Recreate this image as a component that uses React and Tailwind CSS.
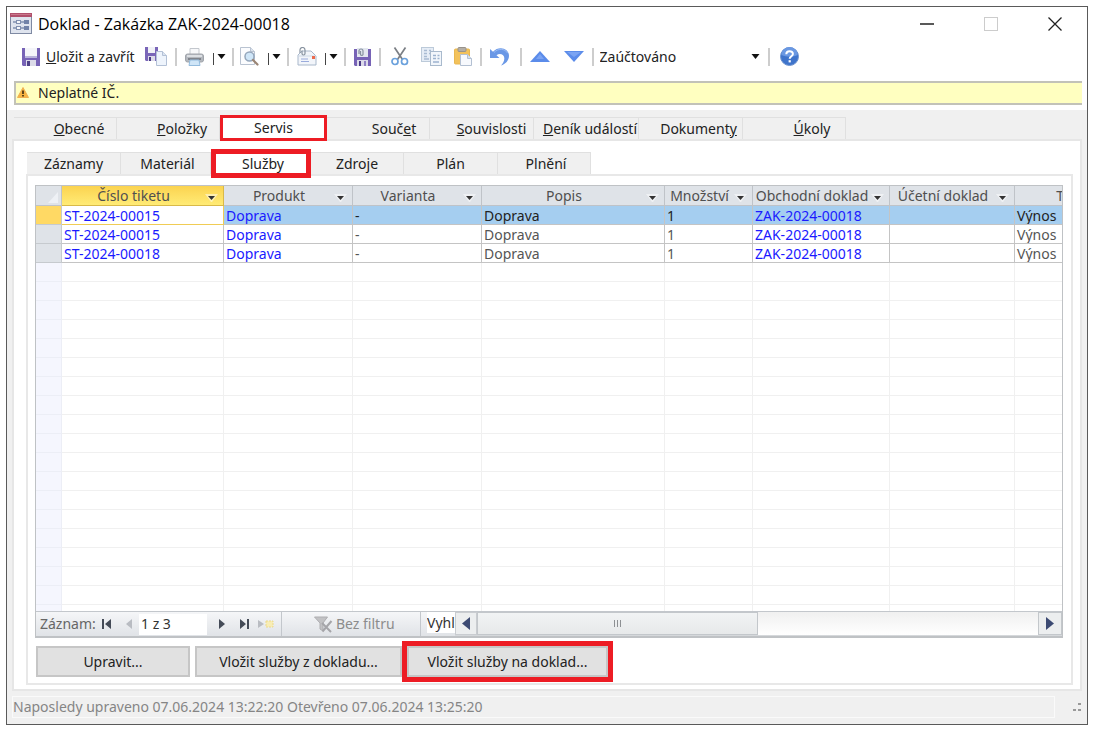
import React, { useState } from "react";

const mainTabs = [
  { label: "Obecné", key: 0, size: "w-[103px] pl-7" },
  { label: "Položky", key: 0, size: "w-[103px] pl-7" },
  { label: "Servis", key: -1, size: "w-[107px]" },
  { label: "Součet", key: 4, size: "w-[103px] pl-8" },
  { label: "Souvislosti", key: 0, size: "w-[104px] pl-5" },
  { label: "Deník událostí", key: 0, size: "w-[105px] pl-2" },
  { label: "Dokumenty", key: 8, size: "w-[104px] pl-4" },
  { label: "Úkoly", key: 0, size: "w-[103px] pl-9" },
];

const subTabs = [
  { label: "Záznamy", size: "w-[94px]" },
  { label: "Materiál", size: "w-[90px] pl-1" },
  { label: "Služby", size: "w-[100px] pl-1" },
  { label: "Zdroje", size: "w-[93px]" },
  { label: "Plán", size: "w-[94px]" },
  { label: "Plnění", size: "w-[93px] pl-1" },
];

const columns = [
  { name: "Číslo tiketu", width: "w-[162px]" },
  { name: "Produkt", width: "w-[129px]" },
  { name: "Varianta", width: "w-[129px]" },
  { name: "Popis", width: "w-[183px]" },
  { name: "Množství", width: "w-[88px]" },
  { name: "Obchodní doklad", width: "w-[137px]" },
  { name: "Účetní doklad", width: "w-[125px]" },
  { name: "Typ", width: "w-[125px]" },
];

const rows = [
  ["ST-2024-00015", "Doprava", "-", "Doprava", "1", "ZAK-2024-00018", "", "Výnos"],
  ["ST-2024-00015", "Doprava", "-", "Doprava", "1", "ZAK-2024-00018", "", "Výnos"],
  ["ST-2024-00018", "Doprava", "-", "Doprava", "1", "ZAK-2024-00018", "", "Výnos"],
];

const linkColumns = [0, 1, 5];
const emptyRows = Array.from({ length: 60 });

// Label with its access key underlined
const KeyLabel = ({ text, at }) => {
  if (at < 0) return <span>{text}</span>;
  return (
    <span>
      {text.slice(0, at)}
      <span className="underline">{text[at]}</span>
      {text.slice(at + 1)}
    </span>
  );
};

const Caret = () => (
  <svg width="9" height="5" viewBox="0 0 9 5" className="shrink-0">
    <path d="M0.5 0h8L4.5 5z" fill="#111" />
  </svg>
);

const Sep = ({ className }) => (
  <span className={`h-[18px] w-0.5 shrink-0 bg-[#cdcdcd] ${className}`} />
);

const FormIcon = () => (
  <svg width="22" height="21" viewBox="0 0 22 21">
    <rect x="0.5" y="0.5" width="21" height="20" fill="#dfe4ee" stroke="#7f8aa3" />
    <rect x="0" y="0" width="22" height="4" fill="#b0506c" />
    <rect x="1" y="1" width="20" height="1" fill="#c9788c" />
    <path d="M3 9h4M3 15h4M11 9h3M11 15h3" stroke="#8190b0" strokeWidth="1.5" />
    <rect x="6.5" y="7.5" width="4" height="3" fill="#f4f6fa" stroke="#8190b0" />
    <rect x="6.5" y="13.5" width="4" height="3" fill="#f4f6fa" stroke="#8190b0" />
    <rect x="14" y="7" width="5" height="4" fill="#7182a8" />
    <rect x="14" y="13" width="5" height="4" fill="#7182a8" />
  </svg>
);

const SaveIcon = () => (
  <svg width="18" height="18" viewBox="0 0 18 18">
    <path d="M0 0h18v18H1l-1-1z" fill="#7763b6" />
    <rect x="3" y="0" width="12" height="9" fill="#f4f5f9" />
    <rect x="3" y="8" width="12" height="2" fill="#b9b4da" />
    <rect x="4" y="12" width="10" height="6" fill="#dcdbe9" />
    <rect x="5" y="13" width="3" height="5" fill="#4f4288" />
  </svg>
);

const SaveNewIcon = () => (
  <svg width="22" height="19" viewBox="0 0 22 19">
    <path d="M0 0h13v14H1l-1-1z" fill="#7a66b8" />
    <rect x="3" y="0" width="7" height="6" fill="#f1f2f7" />
    <rect x="3" y="9" width="7" height="5" fill="#dcdbe9" />
    <rect x="4" y="10" width="2" height="4" fill="#4a3a86" />
    <path d="M11.5 4.5h6l4 4v10h-10z" fill="#eef4fc" stroke="#b3c1d6" />
    <path d="M17.5 4.5v4h4" fill="#dbe4f0" stroke="#b3c1d6" />
  </svg>
);

const PrinterIcon = () => (
  <svg width="19" height="18" viewBox="0 0 19 18">
    <path d="M5 0.5h9v6H5z" fill="#f7f8fa" stroke="#c3c7cd" />
    <rect x="0.5" y="6" width="18" height="8" rx="2" fill="#b4b8be" stroke="#a0a4ab" />
    <rect x="2" y="7" width="15" height="2" fill="#dcdfe3" />
    <rect x="3" y="10" width="13" height="2" fill="#80848c" />
    <path d="M5 12h9l1 5.5H4z" fill="#cfe5f7" stroke="#93bbdd" />
  </svg>
);

const PreviewIcon = () => (
  <svg width="19" height="19" viewBox="0 0 19 19">
    <path d="M0.5 0.5h10l4 4v13h-14z" fill="#fbfcfe" stroke="#b9c3d1" />
    <path d="M10.5 0.5v4h4" fill="#dbe3ee" stroke="#b9c3d1" />
    <circle cx="9.5" cy="9.5" r="4.5" fill="#cfe6f8" stroke="#94a6bb" strokeWidth="1.5" />
    <path d="M13 13l4.500 4.500" stroke="#9a8575" strokeWidth="2.2" strokeLinecap="round" />
  </svg>
);

const MailIcon = () => (
  <svg width="20" height="19" viewBox="0 0 20 19">
    <path d="M1 8l4-4h9l5 5v9H1z" fill="#f2f5fa" stroke="#a9b8cb" />
    <path d="M1 9h18" stroke="#cdd8e6" />
    <path d="M4 12h7M4 14.5h8" stroke="#9aabdc" strokeWidth="1.2" />
    <rect x="15" y="9" width="3" height="3" fill="#ec6a4c" />
    <path d="M3 6V3a2.500 2.500 0 0 1 5 0v3.500a1.500 1.500 0 0 1-3 0V3.500" fill="none" stroke="#87929f" strokeWidth="1.2" />
  </svg>
);

const SaveAttachIcon = () => (
  <svg width="17" height="18" viewBox="0 0 17 18">
    <path d="M0 1h17v17H1l-1-1z" fill="#7763b6" />
    <rect x="3" y="0" width="11" height="9" fill="#e3e7ef" />
    <path d="M5 6V3a2 2 0 0 1 4 0v3.500a1.300 1.300 0 0 1-2.500 0V3" fill="none" stroke="#87929f" strokeWidth="1.2" />
    <rect x="3" y="12" width="11" height="6" fill="#dcdbe9" />
    <rect x="5" y="13" width="2" height="5" fill="#4a3a86" />
    <rect x="10" y="13" width="2" height="5" fill="#8f80c4" />
  </svg>
);

const CutIcon = () => (
  <svg width="18" height="19" viewBox="0 0 18 19" fill="none">
    <path d="M3.500 0.500L11.500 12.500M14.500 0.500L6.500 12.500" stroke="#7b7f85" strokeWidth="1.7" />
    <circle cx="4" cy="14.5" r="3" stroke="#6ba1dc" strokeWidth="1.7" />
    <circle cx="13.5" cy="14.5" r="3" stroke="#6ba1dc" strokeWidth="1.7" />
  </svg>
);

const CopyIcon = () => (
  <svg width="21" height="19" viewBox="0 0 21 19">
    <rect x="0.5" y="0.5" width="12" height="14" fill="#e6edf6" stroke="#bccad9" />
    <path d="M3 3.500h3M8 3.500h2M3 6.500h3M8 6.500h2M3 9.500h3M3 12h5" stroke="#a9bbd2" strokeWidth="1.4" />
    <rect x="9.5" y="4.5" width="11" height="14" fill="#f2f6fb" stroke="#a9bacd" />
    <path d="M12 8.500h3M16.500 8.500h2M12 11.500h3M16.500 11.500h2M12 15h6" stroke="#9db3cf" strokeWidth="1.4" />
  </svg>
);

const PasteIcon = () => (
  <svg width="18" height="19" viewBox="0 0 18 19">
    <rect x="0.5" y="2" width="15" height="15" rx="1" fill="#f3c25b" stroke="#e8b751" />
    <rect x="4" y="0.5" width="8" height="4" rx="1" fill="#b3aea6" stroke="#98938b" />
    <path d="M6.500 7.500h7l4 4v7h-11z" fill="#f7f9fd" stroke="#b3c0d2" />
    <path d="M13.500 7.500v4h4" fill="#d7e1ee" stroke="#b3c0d2" />
  </svg>
);

const UndoIcon = () => (
  <svg width="20" height="19" viewBox="0 0 20 19">
    <path d="M0 2v9h9.500L6.500 8.200C9.500 5.800 14 7 14.300 11c0.200 3-1.300 5.500-3.300 7.500 4.500-1.500 8-5 8-9.800C19 1.500 9 -1.800 3 4.800z" fill="#6a98e6" />
    <path d="M4 5.500C8 1 15 1.500 17.500 6" fill="none" stroke="#9bbcf4" />
  </svg>
);

const Triangle = ({ down }) => (
  <svg width="20" height="11" viewBox="0 0 20 11">
    <path d={down ? "M0 0h20L10 11z" : "M0 11h20L10 0z"} fill="#5b8cea" />
    <path d={down ? "M3 1h14L10 6z" : "M6 8h8L10 3z"} fill="#7ba4f3" />
  </svg>
);

const HelpIcon = () => (
  <svg width="19" height="19" viewBox="0 0 19 19">
    <circle cx="9.5" cy="9.5" r="9" fill="#3f74cb" stroke="#6f94cf" />
    <path d="M1.500 8a8 8 0 0 1 16 0c-4 2-11 2-16 0z" fill="#6a98e2" />
    <path d="M6.300 7.300c0-4.200 6.600-4 6.600-0.300 0 2.300-3.200 2.300-3.200 4.800" fill="none" stroke="#fff" strokeWidth="2" />
    <rect x="8.6" y="13.2" width="2.2" height="2.2" fill="#fff" />
  </svg>
);

const WarningIcon = () => (
  <svg width="12" height="11" viewBox="0 0 12 11">
    <path d="M6 0.500L11.500 10.500H0.500z" fill="#f7b441" stroke="#f0b052" strokeLinejoin="round" />
    <path d="M6 3.500v3.500M6 8v1.500" stroke="#3b2a10" strokeWidth="1.6" />
  </svg>
);

const FilterIcon = () => (
  <svg width="19" height="17" viewBox="0 0 19 17">
    <path d="M0.500 1h13L9 7v8l-3-2V7z" fill="#c2c2c4" stroke="#aeaeb1" />
    <path d="M8 7l9 9M17.500 5L8.500 15.500" stroke="#a5a5a9" strokeWidth="2" />
  </svg>
);

const TitleBar = () => (
  <header className="flex h-[33px] shrink-0 items-center pl-[3px] pr-[18px]">
    <FormIcon />
    <h1 className="ml-1.5 flex-1 font-['Open_Sans','Noto_Sans',sans-serif] text-[16px] leading-6 text-black">
      Doklad - Zakázka ZAK-2024-00018
    </h1>
    <div className="flex items-center gap-9">
      <button aria-label="Minimalizovat" className="flex size-7 items-center justify-center">
        <svg width="14" height="14" viewBox="0 0 14 14">
          <path d="M0 7h14" stroke="#222" strokeWidth="1.5" />
        </svg>
      </button>
      <button aria-label="Maximalizovat" disabled className="flex size-7 items-center justify-center">
        <svg width="14" height="14" viewBox="0 0 14 14">
          <rect x="0.5" y="0.5" width="13" height="13" fill="none" stroke="#ccc" />
        </svg>
      </button>
      <button aria-label="Zavřít" className="flex size-7 items-center justify-center">
        <svg width="14" height="14" viewBox="0 0 14 14">
          <path d="M0.500 0.500l13 13M13.500 0.500l-13 13" stroke="#222" strokeWidth="1.3" />
        </svg>
      </button>
    </div>
  </header>
);

const SplitButton = ({ label, children }) => (
  <div className="flex items-center">
    <button aria-label={label} className="w-5">{children}</button>
    <span className="ml-2 mt-1 h-3 w-px bg-[#444]" />
    <button aria-label={`${label} - možnosti`} className="ml-[3px]"><Caret /></button>
  </div>
);

const Toolbar = () => (
  <div className="flex h-[33px] shrink-0 items-center pl-[15px]">
    <button className="flex items-center gap-1.5">
      <SaveIcon />
      <KeyLabel text="Uložit a zavřít" at={0} />
    </button>
    <button aria-label="Uložit a nový" className="ml-2.5"><SaveNewIcon /></button>
    <Sep className="ml-2 mr-2" />
    <SplitButton label="Tisk"><PrinterIcon /></SplitButton>
    <Sep className="ml-1.5 mr-1.5" />
    <SplitButton label="Náhled"><PreviewIcon /></SplitButton>
    <Sep className="ml-1.5 mr-2" />
    <SplitButton label="Odeslat"><MailIcon /></SplitButton>
    <Sep className="ml-1.5 mr-2" />
    <button aria-label="Uložit přílohu"><SaveAttachIcon /></button>
    <Sep className="ml-2 mr-2.5" />
    <div className="flex items-center gap-3">
      <button aria-label="Vyjmout"><CutIcon /></button>
      <button aria-label="Kopírovat"><CopyIcon /></button>
      <button aria-label="Vložit"><PasteIcon /></button>
    </div>
    <Sep className="ml-2 mr-2" />
    <button aria-label="Zpět"><UndoIcon /></button>
    <Sep className="ml-2.5 mr-2" />
    <div className="flex items-center gap-3.5">
      <button aria-label="Předchozí"><Triangle /></button>
      <button aria-label="Další"><Triangle down /></button>
    </div>
    <Sep className="ml-2 mr-1.5" />
    <div className="relative">
      <select aria-label="Stav" className="w-[162px] appearance-none bg-transparent text-[14px] leading-5">
        <option>Zaúčtováno</option>
      </select>
      <span className="pointer-events-none absolute inset-y-0 right-0.5 flex items-center"><Caret /></span>
    </div>
    <Sep className="ml-1.5 mr-2.5" />
    <button aria-label="Nápověda"><HelpIcon /></button>
  </div>
);

const Grid = () => (
  <div className="min-h-0 flex-1 overflow-hidden">
    <table className="w-[1104px] table-fixed border-separate border-spacing-0 text-left leading-[17px]">
      <thead>
        <tr className="h-[20px]">
          <th className="w-[26px] border-b border-r border-[#bfc3c8] bg-[#dfe3e8] p-0">
            <svg width="24" height="18" viewBox="0 0 24 18">
              <path d="M22 5v11H12z" fill="#eef1f5" />
            </svg>
          </th>
          {columns.map((col, i) => (
            <th
              key={col.name}
              className={`border-b border-r p-0 font-normal text-[#4f4f4f] ${col.width} ${
                i === 0
                  ? "border-[#d9b948] bg-linear-to-b from-[#fbd34f] to-[#ffeb75]"
                  : "border-[#bfc3c8] bg-[#dfe3e8]"
              }`}
            >
              <div className="flex items-center">
                <span className="flex-1 whitespace-nowrap text-center">{col.name}</span>
                <button aria-label={`Filtr ${col.name}`} className="mt-1 flex h-2 w-[18px] items-center">
                  <svg width="13" height="8" viewBox="0 0 13 8">
                    <path d="M0 0h13L7 8H6z" fill="#fff" opacity="0.5" />
                    <path d="M3 2h7L6.500 6z" fill="#333" />
                  </svg>
                </button>
              </div>
            </th>
          ))}
        </tr>
      </thead>
      <tbody>
        {rows.map((row, r) => (
          <tr key={r} className="h-[19px]">
            <td className={`border-b border-r border-[#c6cace] p-0 ${r === 0 ? "bg-[#ffd964]" : "bg-[#dfe3e8]"}`} />
            {row.map((cell, c) => (
              <td
                key={c}
                className={`overflow-hidden whitespace-nowrap border-b border-r pb-0 pl-0.5 pr-0 pt-px ${
                  r === 0 && c === 0 ? "border-[#f0cc55]" : "border-[#c4c4c4]"
                } ${r === 0 && c > 0 ? "bg-[#a5cef0]" : "bg-white"} ${
                  linkColumns.includes(c) ? "text-[#1a1aff]" : r === 0 ? "text-[#222]" : "text-[#555]"
                }`}
              >
                {cell}
              </td>
            ))}
          </tr>
        ))}
        {emptyRows.map((_, r) => (
          <tr key={r} className="h-[19px]">
            <td className="border-b border-r border-[#eceef6] bg-[#f5f6fe] p-0" />
            {columns.map((col) => (
              <td key={col.name} className="border-b border-r border-[#f0f0f0] p-0" />
            ))}
          </tr>
        ))}
      </tbody>
    </table>
  </div>
);

const RecordBar = () => (
  <div className="flex h-[25px] shrink-0 items-stretch border-t border-[#c3c7cc] bg-linear-to-b from-[#f5f6f8] to-[#e0e3e7]">
    <div className="flex w-[246px] shrink-0 items-center border-r border-[#c3c7cc] pl-1">
      <label htmlFor="record" className="w-[61px] text-[#666]">Záznam:</label>
      <button aria-label="První">
        <svg width="11" height="10" viewBox="0 0 11 10">
          <path d="M1 0h2v10H1zM10 0v10L4 5z" fill="#444b57" />
        </svg>
      </button>
      <button aria-label="Předchozí záznam" className="ml-3.5">
        <svg width="7" height="10" viewBox="0 0 7 10"><path d="M6 0v10L0 5z" fill="#b9bcc2" /></svg>
      </button>
      <input
        id="record"
        defaultValue="1 z 3"
        className="ml-1.5 h-[21px] w-[68px] bg-white pb-0.5 pl-0.5 text-[14px] text-[#333]"
      />
      <button aria-label="Další záznam" className="ml-3">
        <svg width="7" height="10" viewBox="0 0 7 10"><path d="M0 0v10l6-5z" fill="#444b57" /></svg>
      </button>
      <button aria-label="Poslední" className="ml-3.5">
        <svg width="10" height="10" viewBox="0 0 10 10">
          <path d="M0 0v10l6-5zM7 0h2v10H7z" fill="#444b57" />
        </svg>
      </button>
      <button aria-label="Nový záznam" className="ml-2">
        <svg width="17" height="10" viewBox="0 0 17 10">
          <path d="M0 1v8l6-4z" fill="#b9bcc2" />
          <rect x="8" y="2" width="7" height="6" fill="#f8edb5" stroke="#ecd98a" strokeDasharray="2 1" />
        </svg>
      </button>
    </div>
    <button disabled className="flex w-[139px] shrink-0 items-center gap-[3px] border-r border-[#c3c7cc] pl-8 text-[#8c8c8c]">
      <FilterIcon />
      Bez filtru
    </button>
    <input
      aria-label="Vyhledávání"
      defaultValue="Vyhl"
      className="ml-1.5 h-[21px] w-7 shrink-0 bg-white text-[14px] text-[#333]"
    />
    <div className="flex flex-1 items-stretch border-b border-[#d5d8db] bg-linear-to-b from-[#f0f0f0] to-white">
      <button aria-label="Posunout vlevo" className="flex w-[22px] items-center justify-center border border-[#c9ccd0] bg-[#eceeef]">
        <svg width="8" height="13" viewBox="0 0 8 13"><path d="M8 0v13L0 6.500z" fill="#3c4a73" /></svg>
      </button>
      <div className="flex flex-1">
        <div className="flex w-1/2 items-center justify-center border border-[#c3c7cb] bg-linear-to-b from-[#f1f3f4] to-[#e7e9ea]">
          <svg width="7" height="7" viewBox="0 0 7 7">
            <path d="M0.500 0v7M3.500 0v7M6.500 0v7" stroke="#8d9093" />
          </svg>
        </div>
      </div>
      <button aria-label="Posunout vpravo" className="flex w-6 items-center justify-center border border-[#c3c7cb] bg-[#eceeef]">
        <svg width="8" height="13" viewBox="0 0 8 13"><path d="M0 0v13l8-6.500z" fill="#3c4a73" /></svg>
      </button>
    </div>
  </div>
);

const App = () => {
  const [tab, setTab] = useState("Servis");
  const [subTab, setSubTab] = useState("Služby");
  const action = "h-[31px] border-2 border-[#c6c6c6] bg-[#e1e1e1]";

  return (
    <div className="flex h-screen flex-col bg-white p-1.5 font-['Noto_Sans',sans-serif] text-[14px] leading-5 text-[#222]">
      <div className="flex min-h-0 flex-1 flex-col border border-[#5a5a5a] bg-white">
        <TitleBar />
        <Toolbar />

        <div className="mb-[5px] ml-[7px] mr-[5px] mt-2 flex h-6 shrink-0 items-center gap-[9px] border-2 border-r-0 border-[#c2c2b8] bg-[#ffffc0] pb-px pl-px">
          <WarningIcon />
          <span>Neplatné IČ.</span>
        </div>

        <main className="flex min-h-0 flex-1 flex-col bg-[#f0f0f0] px-[5px] pt-[7px]">
          <nav className="flex h-[22px] shrink-0 items-center pl-0.5">
            {mainTabs.map((t) => (
              <button
                key={t.label}
                onClick={() => setTab(t.label)}
                className={`shrink-0 whitespace-nowrap ${t.size} ${
                  tab === t.label
                    ? "z-10 h-[26px] border-3 border-[#ed1c24] bg-white"
                    : "h-full border-r border-t border-[#e0e0e0]"
                }`}
              >
                <KeyLabel text={t.label} at={t.key} />
              </button>
            ))}
          </nav>

          <section className="flex min-h-0 flex-1 flex-col border-2 border-[#e6e6e6] bg-white pb-1 pl-3 pr-[7px] pt-[11px]">
            <nav className="flex h-[22px] shrink-0 items-center pl-px">
              {subTabs.map((t) => (
                <button
                  key={t.label}
                  onClick={() => setSubTab(t.label)}
                  className={`shrink-0 ${t.size} ${
                    subTab === t.label
                      ? "z-10 h-[29px] border-5 border-[#ed1c24] bg-white"
                      : "h-full border-r border-t border-[#e0e0e0] bg-[#f0f0f0]"
                  }`}
                >
                  {t.label}
                </button>
              ))}
            </nav>

            <div className="flex min-h-0 flex-1 flex-col border-2 border-[#e8e8e8] pb-1.5 pl-[7px] pr-2 pt-[9px]">
              <div className="flex min-h-0 flex-1 flex-col border border-b-2 border-[#bfc2c5]">
                <Grid />
                <RecordBar />
              </div>

              <div className="mt-2 flex h-[31px] shrink-0 items-center">
                <button className={`ml-px w-[154px] ${action}`}>Upravit...</button>
                <button className={`ml-[5px] w-[207px] ${action}`}>Vložit služby z dokladu...</button>
                <div className="z-10 border-5 border-[#ed1c24]">
                  <button className={`block w-[201px] ${action}`}>Vložit služby na doklad...</button>
                </div>
              </div>
            </div>
          </section>

          <footer className="flex h-[33px] shrink-0 items-center justify-between pb-px">
            <p className="h-[22px] flex-1 border border-[#fafafa] text-[#858585]">
              Naposledy upraveno 07.06.2024 13:22:20 Otevřeno 07.06.2024 13:25:20
            </p>
            <svg width="9" height="9" viewBox="0 0 9 9" className="ml-[18px] shrink-0">
              <path d="M5 0h3v2H5zM0 6h3v2H0zM5 6h3v2H5z" fill="#999" />
            </svg>
          </footer>
        </main>
      </div>
    </div>
  );
};

export default App;
